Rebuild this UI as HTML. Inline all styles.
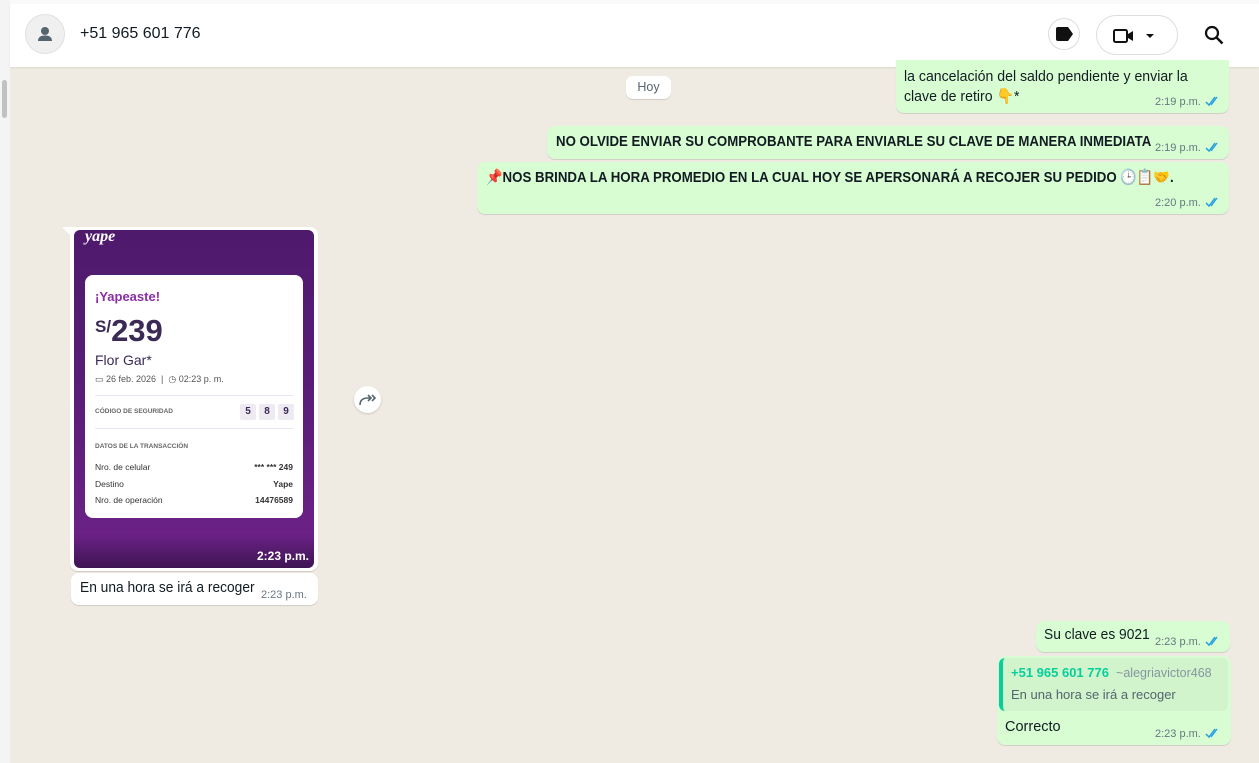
<!DOCTYPE html>
<html><head><meta charset="utf-8"><style>
*{margin:0;padding:0;box-sizing:border-box}
body{width:1259px;height:763px;overflow:hidden;background:#efeae2;font-family:"Liberation Sans",sans-serif;position:relative;color:#111b21}
.a{position:absolute}
.b{position:absolute;background:#d9fdd3;border-radius:8px;box-shadow:0 1px .5px rgba(11,20,26,.13)}
.w{background:#fff}
.t{position:absolute;font-size:11px;color:#667781;white-space:nowrap}
.n{white-space:nowrap;transform-origin:0 0}
.tick{display:inline-block;margin-left:4px;vertical-align:-2px}
</style></head><body>
<div class="a" style="left:0;top:0;width:10px;height:763px;background:#f4f4f4"></div>
<div class="a" style="left:2px;top:80px;width:5px;height:38px;background:#c1c1c1;border-radius:3px"></div>
<div class="a" style="left:10px;top:0;width:1249px;height:4px;background:#fafafa"></div>
<div class="a" style="left:10px;top:4px;width:1249px;height:63px;background:#fff;box-shadow:0 1px 2px rgba(0,0,0,.08)">
 <div class="a" style="left:15px;top:10px;width:40px;height:40px;border-radius:50%;background:#f0f0f0;border:1px solid #e0e0e0">
  <svg class="a" style="left:9px;top:9px" width="20" height="20" viewBox="0 0 20 20"><circle cx="10" cy="7" r="4" fill="#54656f"/><path d="M3 17c0-4 3-5.5 7-5.5s7 1.5 7 5.5z" fill="#54656f"/></svg>
 </div>
 <div class="a" style="left:70px;top:21px;font-size:16px;color:#111b21">+51 965 601 776</div>
 <div class="a" style="left:1038px;top:14px;width:32px;height:32px;border-radius:50%;border:1px solid #ddd">
  <svg class="a" style="left:6px;top:8px" width="20" height="14" viewBox="0 0 20 14"><path d="M1 2a2 2 0 0 1 2-2h10l5 7-5 7H3a2 2 0 0 1-2-2z" fill="#111"/></svg>
 </div>
 <div class="a" style="left:1086px;top:11px;width:82px;height:40px;border-radius:20px;border:1px solid #ddd">
  <svg class="a" style="left:16px;top:12px" width="22" height="16" viewBox="0 0 22 16"><rect x="1" y="2" width="13" height="12" rx="1.5" fill="none" stroke="#111" stroke-width="2"/><path d="M15 6l5-3v10l-5-3z" fill="#111"/></svg>
  <svg class="a" style="left:48px;top:17px" width="10" height="6"><path d="M1 1h8L5 5z" fill="#111"/></svg>
 </div>
 <svg class="a" style="left:1193px;top:20px" width="22" height="22" viewBox="0 0 22 22"><circle cx="9" cy="9" r="6" fill="none" stroke="#111" stroke-width="2.2"/><path d="M13.5 13.5l6 6" stroke="#111" stroke-width="2.5"/></svg>
</div>

<div class="b" style="left:896px;top:60px;width:333px;height:53px;border-radius:0 0 8px 8px"></div>
<div class="a n" style="left:904px;top:67px;font-size:15px;line-height:20px;transform:scaleX(.94)">la cancelación del saldo pendiente y enviar la<br>clave de retiro 👇*</div>
<div class="t" style="left:1155px;top:96px">2:19 p.m.<svg class="tick" width="16" height="11" viewBox="0 0 16 11"><path d="M1 6l3 3 6-8M6 9l6-8" fill="none" stroke="#1e9de0" stroke-width="1.4"/></svg></div>

<div class="a w" style="left:626px;top:76px;width:45px;height:23px;border-radius:7px;font-size:12.5px;color:#54656f;text-align:center;line-height:23px;box-shadow:0 1px .5px rgba(0,0,0,.13)">Hoy</div>

<div class="b" style="left:547px;top:126px;width:682px;height:33px"></div>
<div class="a n" style="left:556px;top:133px;font-size:15px;font-weight:bold;transform:scaleX(.883)">NO OLVIDE ENVIAR SU COMPROBANTE PARA ENVIARLE SU CLAVE DE MANERA INMEDIATA</div>
<div class="t" style="left:1155px;top:142px">2:19 p.m.<svg class="tick" width="16" height="11" viewBox="0 0 16 11"><path d="M1 6l3 3 6-8M6 9l6-8" fill="none" stroke="#1e9de0" stroke-width="1.4"/></svg></div>

<div class="b" style="left:477px;top:162px;width:752px;height:52px"></div>
<div class="a n" style="left:486px;top:168px;font-size:15px;font-weight:bold;transform:scaleX(.885)">📌NOS BRINDA LA HORA PROMEDIO EN LA CUAL HOY SE APERSONARÁ A RECOJER SU PEDIDO 🕒📋🤝.</div>
<div class="t" style="left:1155px;top:197px">2:20 p.m.<svg class="tick" width="16" height="11" viewBox="0 0 16 11"><path d="M1 6l3 3 6-8M6 9l6-8" fill="none" stroke="#1e9de0" stroke-width="1.4"/></svg></div>

<!-- image bubble -->
<svg class="a" style="left:62px;top:227px" width="12" height="12"><path d="M0 0h12v12z" fill="#fff"/></svg>
<div class="a w" style="left:70px;top:227px;width:248px;height:344px;border-radius:0 8px 8px 8px;box-shadow:0 1px .5px rgba(0,0,0,.13)"></div>
<div class="a" style="left:74px;top:230px;width:240px;height:338px;border-radius:6px;background:linear-gradient(180deg,#4e1a6c 0%,#5a1d78 50%,#6b2186 90%,#3e1552 100%);overflow:hidden">
 <div class="a" style="left:11px;top:-2px;font-family:'Liberation Serif',serif;font-style:italic;font-weight:bold;color:#fff;font-size:16px">yape</div>
 <div class="a w" style="left:11px;top:45px;width:218px;height:243px;border-radius:8px;color:#3a2a55">
  <div class="a" style="left:10px;top:14px;font-size:13px;font-weight:bold;color:#8c2ea6">¡Yapeaste!</div>
  <div class="a" style="left:10px;top:38px;font-weight:bold;color:#3a2a55"><span style="font-size:17px;vertical-align:9px">S/</span><span style="font-size:31px">239</span></div>
  <div class="a" style="left:10px;top:77px;font-size:14px">Flor Gar*</div>
  <div class="a" style="left:10px;top:99px;font-size:9px;color:#555">▭ 26 feb. 2026 &nbsp;| &nbsp;◷ 02:23 p. m.</div>
  <div class="a" style="left:10px;top:120px;width:198px;height:1px;background:#e6e4ec"></div>
  <div class="a" style="left:10px;top:133px;font-size:6.5px;font-weight:bold;color:#666">CÓDIGO DE SEGURIDAD</div>
  <div class="a" style="left:155px;top:129px;font-size:10px;font-weight:bold">
   <span style="display:inline-block;width:16px;height:16px;background:#eeeaf2;border-radius:2px;text-align:center;line-height:16px;margin-right:3px">5</span><span style="display:inline-block;width:16px;height:16px;background:#eeeaf2;border-radius:2px;text-align:center;line-height:16px;margin-right:3px">8</span><span style="display:inline-block;width:16px;height:16px;background:#eeeaf2;border-radius:2px;text-align:center;line-height:16px">9</span></div>
  <div class="a" style="left:10px;top:153px;width:198px;height:1px;background:#e6e4ec"></div>
  <div class="a" style="left:10px;top:168px;font-size:6.5px;font-weight:bold;color:#666">DATOS DE LA TRANSACCIÓN</div>
  <div class="a" style="left:10px;top:184px;font-size:8.5px;line-height:16.5px;color:#333">Nro. de celular<br>Destino<br>Nro. de operación</div>
  <div class="a" style="right:10px;top:184px;font-size:8.5px;line-height:16.5px;text-align:right;font-weight:bold;color:#333">*** *** 249<br>Yape<br>14476589</div>
 </div>
 <div class="a" style="right:5px;top:319px;font-size:12px;font-weight:bold;color:#fff">2:23 p.m.</div>
</div>
<div class="a w" style="left:71px;top:573px;width:247px;height:32px;border-radius:8px;box-shadow:0 1px .5px rgba(0,0,0,.13)"></div>
<div class="a n" style="left:80px;top:580px;font-size:14.5px;transform:scaleX(.95)">En una hora se irá a recoger</div>
<div class="t" style="left:261px;top:589px">2:23 p.m.</div>
<div class="a w" style="left:354px;top:386px;width:27px;height:27px;border-radius:50%;box-shadow:0 1px 2px rgba(0,0,0,.15)">
 <svg class="a" style="left:5px;top:7px" width="18" height="13" viewBox="0 0 18 13"><path d="M1 12c0-5 3-7 8-7h3M9 2l3 3-3 3M13 2l3 3-3 3" fill="none" stroke="#54656f" stroke-width="1.6"/></svg>
</div>

<div class="b" style="left:1036px;top:621px;width:194px;height:31px"></div>
<div class="a n" style="left:1044px;top:627px;font-size:14.5px;transform:scaleX(.95)">Su clave es 9021</div>
<div class="t" style="left:1155px;top:636px">2:23 p.m.<svg class="tick" width="16" height="11" viewBox="0 0 16 11"><path d="M1 6l3 3 6-8M6 9l6-8" fill="none" stroke="#1e9de0" stroke-width="1.4"/></svg></div>

<div class="b" style="left:997px;top:656px;width:234px;height:89px"></div>
<div class="a" style="left:999px;top:658px;width:229px;height:53px;background:#d1f4cc;border-radius:6px;border-left:4px solid #06cf9c"></div>
<div class="a" style="left:1011px;top:665px;font-size:13px;color:#06cf9c;font-weight:bold;white-space:nowrap">+51 965 601 776 <span style="font-weight:normal;color:#8696a0;font-size:12.5px">&nbsp;~alegriavictor468</span></div>
<div class="a" style="left:1011px;top:687px;font-size:13px;color:#54656f">En una hora se irá a recoger</div>
<div class="a" style="left:1005px;top:719px;font-size:14.5px">Correcto</div>
<div class="t" style="left:1155px;top:728px">2:23 p.m.<svg class="tick" width="16" height="11" viewBox="0 0 16 11"><path d="M1 6l3 3 6-8M6 9l6-8" fill="none" stroke="#1e9de0" stroke-width="1.4"/></svg></div>
</body></html>
